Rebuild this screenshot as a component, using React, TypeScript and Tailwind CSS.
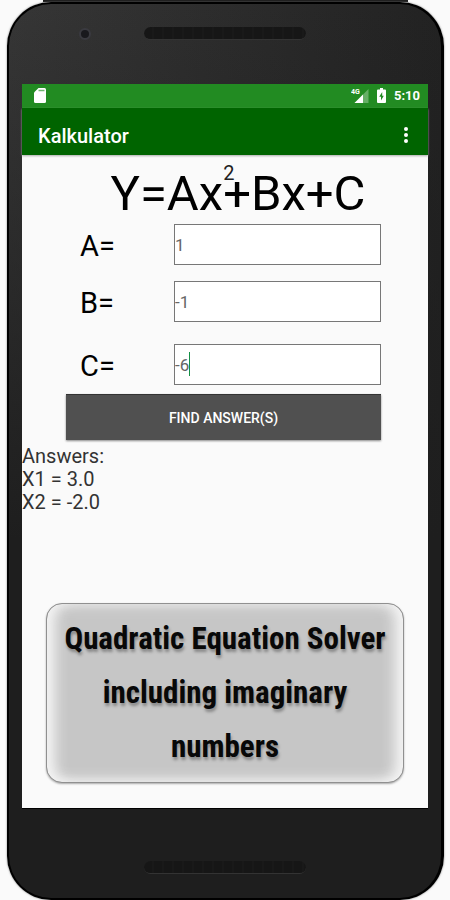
import React, { useState } from "react";

type FieldProps = {
  id: string;
  label: string;
  value: string;
  onChange: (value: string) => void;
  active?: boolean;
};

function CoefficientField({ id, label, value, onChange, active }: FieldProps) {
  return (
    <div className="grid grid-cols-[94px_1fr] items-center">
      <label htmlFor={id} className="pt-[2px] text-[29px] leading-8 text-black">
        {label}
      </label>
      <div className="relative">
        <input
          id={id}
          type="text"
          inputMode="decimal"
          value={value}
          onChange={(event) => onChange(event.target.value)}
          className="block h-[41px] w-full border border-[#777777] bg-white p-0 text-[17px] text-[#666666] outline-none"
        />
        {active && <span className="absolute top-2 left-[15px] h-6 w-px bg-[#149045]" />}
      </div>
    </div>
  );
}

function Speaker() {
  return (
    <div className="h-[13px] w-[162px] rounded-full border-b border-[#333333] bg-[repeating-linear-gradient(90deg,#161616_0px,#161616_8px,#191919_8px,#191919_10px)]" />
  );
}

function StatusBar() {
  return (
    <div className="flex h-6 items-center bg-[#228b22] pr-2 pl-3 text-white">
      <svg className="h-4 w-3" viewBox="0 0 12 16" aria-hidden="true">
        <path d="M4.5 0H10.5Q12 0 12 1.5V13.5Q12 15 10.5 15H1.5Q0 15 0 13.5V4.5Z" fill="white" />
        <path d="M4.5 2.5H10.5" stroke="#6fb56f" strokeWidth="1.5" />
      </svg>
      <svg className="ml-auto h-4 w-[18px]" viewBox="0 0 18 16" aria-hidden="true">
        <path d="M17.5 1V15H3.5Z" fill="#66af66" />
        <path d="M12 6.5V15H3.5Z" fill="white" />
        <text x="0" y="6" fill="white" fontFamily="Roboto" fontSize="7" fontWeight="700">
          4G
        </text>
      </svg>
      <svg className="ml-2 h-4 w-[9px]" viewBox="0 0 9 16" aria-hidden="true">
        <path d="M3 0H6V1.5H8Q9 1.5 9 2.5V14Q9 15 8 15H1Q0 15 0 14V2.5Q0 1.5 1 1.5H3Z" fill="white" />
        <path d="M5.2 4L2.2 8.8H4V12.5L6.8 7.7H5.2Z" fill="#228b22" />
      </svg>
      <span className="ml-2 text-[13px] leading-6 font-bold">5:10</span>
    </div>
  );
}

function solve(a: number, b: number, c: number): string[] {
  const d = b * b - 4 * a * c;
  const middle = -b / (2 * a);
  const offset = Math.sqrt(Math.abs(d)) / (2 * a);
  if (d < 0) {
    return [`${middle.toFixed(1)} + ${offset.toFixed(1)}i`, `${middle.toFixed(1)} - ${offset.toFixed(1)}i`];
  }
  return [(middle + offset).toFixed(1), (middle - offset).toFixed(1)];
}

export default function App() {
  const [a, setA] = useState("1");
  const [b, setB] = useState("-1");
  const [c, setC] = useState("-6");
  const [answers, setAnswers] = useState(["3.0", "-2.0"]);

  const submit = (event: React.FormEvent) => {
    event.preventDefault();
    setAnswers(solve(Number(a), Number(b), Number(c)));
  };

  return (
    <div className="flex min-h-screen flex-col bg-[#fafafa] pr-[6px] pl-[7px] font-['Roboto',sans-serif]">
      <div className="mx-9 h-[2px] bg-[#1c1c1c]" />
      <div className="flex flex-1 flex-col rounded-[44px] border-2 border-r-[3px] border-black bg-[linear-gradient(180deg,transparent_0%,#1e1e1e_60%),linear-gradient(90deg,#363636_0%,#222222_100%)] px-[13px] shadow-[0_0_2px_#777777]">
        <div className="relative flex h-20 justify-center pt-[23px]">
          <span className="absolute top-6 left-[57px] size-3 rounded-full border-2 border-[#3a3a40] bg-[#19191d]" />
          <Speaker />
        </div>

        <main className="flex flex-1 flex-col bg-[#fafafa]">
          <StatusBar />
          <header className="flex h-[47px] items-center justify-between bg-[#006400] pr-3 pl-4 text-white shadow-[0_1px_2px_#aaaaaa]">
            <span className="pt-2 text-xl leading-6 font-medium">Kalkulator</span>
            <button type="button" aria-label="More options" className="flex w-5 flex-col items-center gap-[2px] pt-[6px]">
              <span className="size-1 rounded-full bg-white" />
              <span className="size-1 rounded-full bg-white" />
              <span className="size-1 rounded-full bg-white" />
            </button>
          </header>

          <form onSubmit={submit} className="flex flex-col pr-[47px] pl-11">
            <h1 className="flex h-[69px] justify-center pt-2 pl-[29px] text-[49px] leading-[62px] whitespace-nowrap text-black">
              <span>Y=Ax</span>
              <span className="relative">
                <sup className="absolute top-0 left-0 text-xl leading-5 text-[#222222]">2</sup>+Bx+C
              </span>
            </h1>
            <div className="flex flex-col pl-[14px]">
              <CoefficientField id="coefficient-a" label="A=" value={a} onChange={setA} />
              <div className="h-4" />
              <CoefficientField id="coefficient-b" label="B=" value={b} onChange={setB} />
              <div className="h-[22px]" />
              <CoefficientField id="coefficient-c" label="C=" value={c} onChange={setC} active />
            </div>
            <button
              type="submit"
              className="mt-[9px] h-[46px] border-t border-[#333333] bg-[#505050] text-sm font-medium text-white shadow-[0_1px_2px_#888888]"
            >
              FIND ANSWER(S)
            </button>
          </form>

          <output className="mt-[5px] block text-xl leading-[23px] text-[#333333]">
            <span className="block">Answers:</span>
            <span className="block">X1 = {answers[0]}</span>
            <span className="block">X2 = {answers[1]}</span>
          </output>

          <section className="mx-6 mt-auto mb-[25px] rounded-2xl border border-[#909090] bg-[#c6c6c6] py-2 text-center font-['Roboto_Condensed','Liberation_Sans',sans-serif] text-[31px] leading-[54px] font-bold text-[#080808] shadow-[inset_14px_0_14px_-6px_#f4f4f4,inset_-14px_0_14px_-6px_#f4f4f4,inset_0_8px_14px_-6px_#dddddd,inset_0_-8px_14px_-6px_#eeeeee,0_1px_2px_#aaaaaa] [text-shadow:1px_3px_3px_#888888]">
            <p className="whitespace-nowrap">Quadratic Equation Solver</p>
            <p>including imaginary</p>
            <p>numbers</p>
          </section>
        </main>

        <div className="flex h-[90px] justify-center border-t border-black pt-[52px]">
          <Speaker />
        </div>
      </div>
    </div>
  );
}
